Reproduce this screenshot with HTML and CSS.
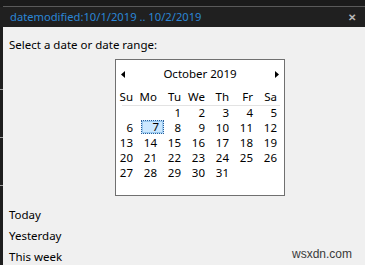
FILE: index.html
```html
<!DOCTYPE html>
<html>
<head>
<meta charset="utf-8">
<link rel="stylesheet" href="styles.css">
</head>
<body>
<div class="frame">
  <div class="top"></div>
  <div class="titlebar">
    <span class="title">datemodified:10/1/2019 .. 10/2/2019</span>
    <span class="close">✕</span>
  </div>
  <div class="main">
    <div class="strip">
      <div class="tick t1"></div>
      <div class="tick"></div>
      <div class="tick"></div>
    </div>
    <div class="content">
      <div class="prompt">Select a date or date range:</div>
      <div class="cal">
        <div class="cal-head">
          <svg class="arrow" width="4" height="7" viewBox="0 0 4 7"><path d="M4 0 L0 3.5 L4 7 Z" fill="#000"/></svg>
          <span class="month">October 2019</span>
          <svg class="arrow" width="4" height="7" viewBox="0 0 4 7"><path d="M0 0 L4 3.5 L0 7 Z" fill="#000"/></svg>
        </div>
        <div class="grid names">
          <span>Su</span><span>Mo</span><span>Tu</span><span>We</span><span>Th</span><span>Fr</span><span>Sa</span>
        </div>
        <div class="sep"></div>
        <div class="grid days">
          <span></span><span></span><span>1</span><span>2</span><span>3</span><span>4</span><span>5</span>
          <span>6</span><span class="sel"><i>7</i></span><span>8</span><span>9</span><span>10</span><span>11</span><span>12</span>
          <span>13</span><span>14</span><span>15</span><span>16</span><span>17</span><span>18</span><span>19</span>
          <span>20</span><span>21</span><span>22</span><span>23</span><span>24</span><span>25</span><span>26</span>
          <span>27</span><span>28</span><span>29</span><span>30</span><span>31</span><span></span><span></span>
        </div>
      </div>
      <ul class="quick">
        <li>Today</li>
        <li>Yesterday</li>
        <li>This week</li>
      </ul>
    </div>
  </div>
  <div class="watermark">wsxdn.com</div>
</div>
</body>
</html>
```

FILE: styles.css
```css
html, body {
  margin: 0;
  padding: 0;
  background: #1b1b1b;
}
.frame {
  position: relative;
  width: 365px;
  height: 265px;
  overflow: hidden;
  font-family: "Noto Sans", "Open Sans", sans-serif;
  font-size: 11px;
  color: #000;
}
.top {
  height: 6px;
  background: #1b1b1b;
  border-bottom: 1px solid #5a5a5a;
  margin-left: 3px;
}
.titlebar {
  height: 20px;
  background: #202020;
  display: flex;
  align-items: center;
  justify-content: space-between;
  padding: 0 9px 0 10px;
}
.title {
  color: #2b86d6;
  font-size: 11.2px;
  line-height: 20px;
}
.close {
  color: #b8b8b8;
  font-size: 10px;
  font-weight: bold;
  line-height: 20px;
}
.main {
  display: flex;
  height: 238px;
}
.strip {
  width: 3px;
  background: #1e1e1e;
  flex: none;
}
.tick {
  height: 1px;
  background: #9a9a9a;
  margin-top: 47px;
}
.tick.t1 {
  margin-top: 62px;
}
.content {
  flex: 1;
  background: #f0f0f0;
  padding-left: 6px;
}
.prompt {
  margin-top: 10px;
  line-height: 16px;
  font-size: 11.5px;
}
.cal {
  margin: 6px 0 0 106px;
  width: 168px;
  height: 135px;
  background: #fff;
  border: 1px solid #707070;
}
.cal-head {
  display: flex;
  align-items: center;
  justify-content: space-between;
  padding: 0 5px 0 5px;
  height: 16px;
  margin-top: 6px;
}
.month {
  font-size: 11.5px;
  line-height: 16px;
}
.grid {
  display: grid;
  grid-template-columns: repeat(7, 24px);
  margin-left: -1px;
}
.grid span {
  text-align: right;
  padding-right: 6px;
  line-height: 15px;
  height: 15px;
}
.names {
  margin-top: 7px;
}
.names span {
  font-size: 11.5px;
  line-height: 16px;
  height: 16px;
}
.sep {
  height: 1px;
  background: #e3e3e3;
  margin: 0 4px 0 6px;
}
.days {
  margin-top: -1px;
}
.days span {
  font-size: 11.5px;
}
.days .sel {
  padding-right: 0;
}
.days .sel i {
  font-style: normal;
  display: block;
  box-sizing: border-box;
  width: 23px;
  height: 14px;
  margin-left: 2px;
  background: #cce8ff;
  border: 1px dotted #2a5f9a;
  outline: 1px solid #99c9ef;
  outline-offset: -2px;
  line-height: 12px;
  padding-right: 4px;
}
.quick {
  list-style: none;
  margin: 8px 0 0 0;
  padding: 0;
}
.quick li {
  line-height: 21px;
  height: 21px;
  font-size: 11.5px;
}
.watermark {
  position: absolute;
  left: 292px;
  top: 247px;
  font-family: "Liberation Sans", Arial, sans-serif;
  font-size: 12px;
  color: #3a3a3a;
  line-height: 14px;
}
```
